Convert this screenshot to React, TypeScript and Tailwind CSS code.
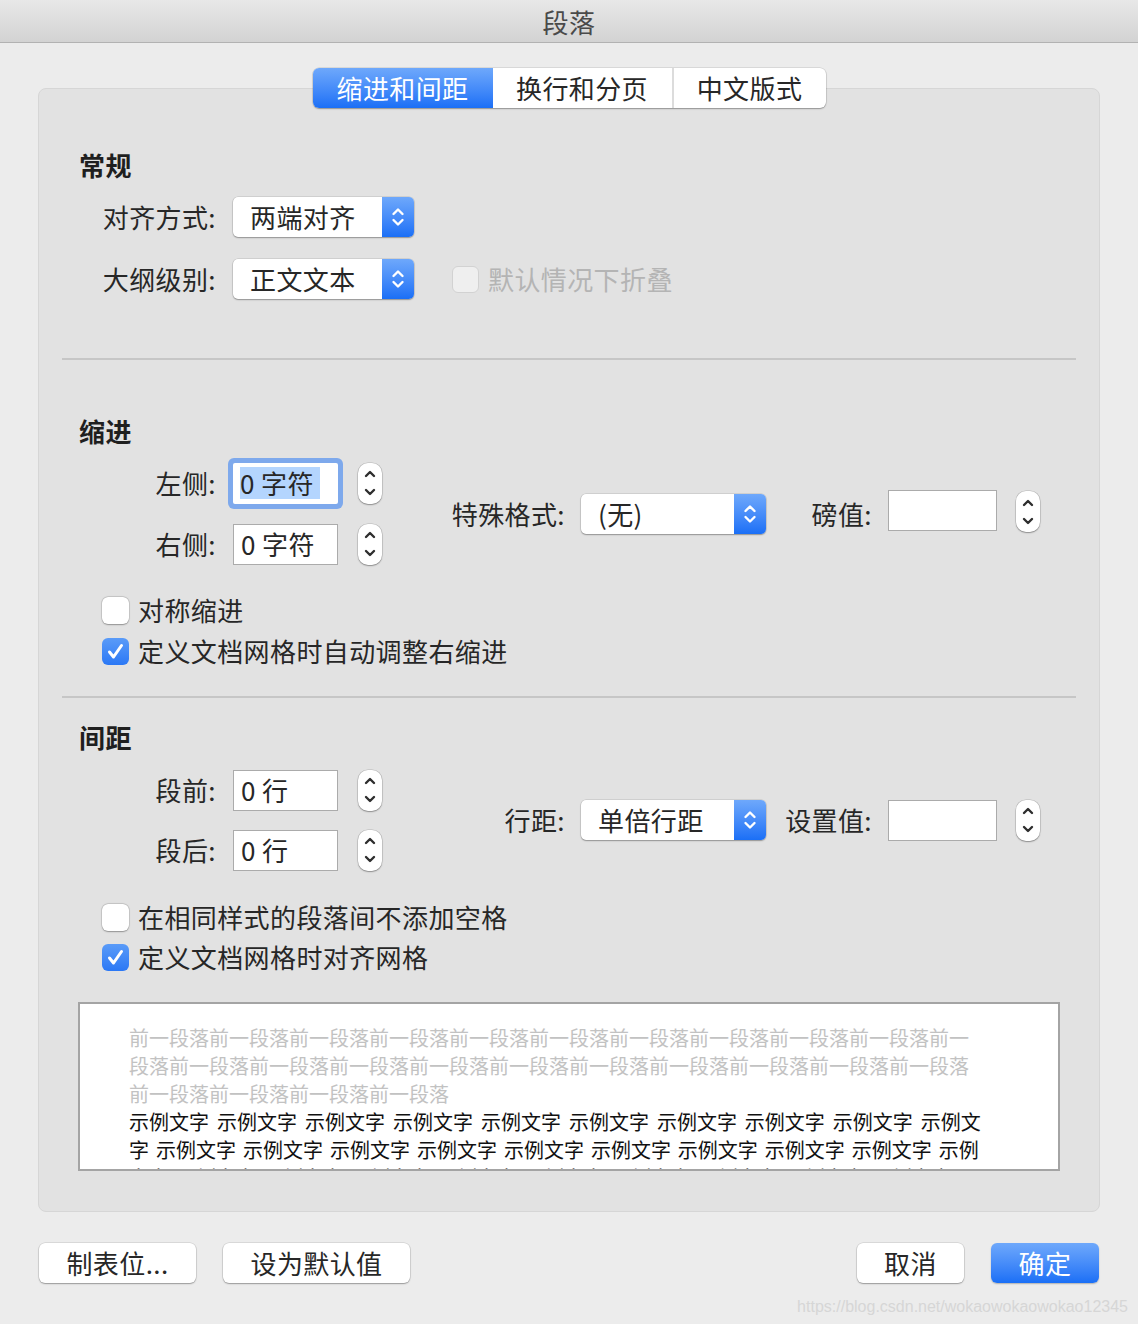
import React from 'react';

const PopupArrows = () => (
  <svg width="14" height="20" viewBox="0 0 14 20" fill="none" stroke="white" strokeWidth="2.4" strokeLinecap="round" strokeLinejoin="round">
    <path d="M2.5 7 L7 2.5 L11.5 7" />
    <path d="M2.5 13 L7 17.5 L11.5 13" />
  </svg>
);

const StepperArrows = () => (
  <svg width="12" height="26" viewBox="0 0 12 26" fill="none" stroke="#2e2e2e" strokeWidth="2.4" strokeLinecap="round" strokeLinejoin="round">
    <path d="M2 6 L6 2 L10 6" />
    <path d="M2 20 L6 24 L10 20" />
  </svg>
);

function Popup({ value, width }: { value: string; width: string }) {
  return (
    <div className={`${width} h-[40px] flex rounded-[5px] bg-white overflow-hidden shadow-[0_1px_1.5px_rgba(0,0,0,0.3),0_0_0_0.5px_rgba(0,0,0,0.15)]`}>
      <div className="flex-1 flex items-center pl-[17px] text-[26px] leading-none">{value}</div>
      <div className="w-[32px] flex items-center justify-center bg-linear-to-b from-[#6ea8fb] to-[#1a6ff6]">
        <PopupArrows />
      </div>
    </div>
  );
}

function Stepper() {
  return (
    <div className="w-[24px] h-[41px] flex items-center justify-center rounded-[10px] bg-white shadow-[0_1px_1.5px_rgba(0,0,0,0.3),0_0_0_0.5px_rgba(0,0,0,0.18)]">
      <StepperArrows />
    </div>
  );
}

function Field({ value, width, focused }: { value?: string; width: string; focused?: boolean }) {
  return (
    <div
      className={`${width} h-[41px] flex items-center pl-[7px] bg-white text-[26px] leading-none ${
        focused ? 'rounded-[2px] shadow-[0_0_0_5px_#7ea9ec]' : 'border border-[#ababab]'
      }`}
    >
      {value && (focused ? <span className="bg-[#b4d5fe] py-[3px] pr-[6px]">{value}</span> : <span>{value}</span>)}
    </div>
  );
}

function Checkbox({ label, checked, disabled }: { label: string; checked?: boolean; disabled?: boolean }) {
  return (
    <div className="flex items-center h-[40px]">
      {checked ? (
        <div className="w-[27px] h-[27px] rounded-[6px] bg-linear-to-b from-[#5a9bf8] to-[#2b78f5] flex items-center justify-center">
          <svg width="27" height="27" viewBox="0 0 27 27" fill="none" stroke="white" strokeWidth="3" strokeLinecap="round" strokeLinejoin="round">
            <path d="M7.5 14 L11.5 19 L19.5 7.5" />
          </svg>
        </div>
      ) : (
        <div
          className={`w-[27px] h-[27px] rounded-[6px] ${
            disabled ? 'bg-[#efefef] border border-[#d2d2d2]' : 'bg-white shadow-[0_0.5px_1.5px_rgba(0,0,0,0.3),0_0_0_0.5px_rgba(0,0,0,0.15)]'
          }`}
        />
      )}
      <span className={`ml-[9px] text-[26px] leading-none ${disabled ? 'text-[#b4b4b4]' : ''}`}>{label}</span>
    </div>
  );
}

const Label = ({ text, width }: { text: string; width: string }) => (
  <div className={`${width} text-right text-[26px] leading-none`}>{text}</div>
);

const Heading = ({ text }: { text: string }) => (
  <div className="h-[36px] flex items-center text-[26px] font-bold leading-none text-[#1f1f1f]">{text}</div>
);

const Separator = () => <div className="h-[2px] bg-[#c6c6c6]" />;

function Button({ text, width, primary }: { text: string; width: string; primary?: boolean }) {
  return (
    <div
      className={`${width} h-[40px] flex items-center justify-center rounded-[6px] text-[26px] leading-none ${
        primary
          ? 'bg-linear-to-b from-[#6ea8fb] to-[#1a6ff6] text-white shadow-[0_1px_1.5px_rgba(0,0,0,0.25)]'
          : 'bg-white shadow-[0_1px_1.5px_rgba(0,0,0,0.3),0_0_0_0.5px_rgba(0,0,0,0.15)]'
      }`}
    >
      {text}
    </div>
  );
}

const grayLines = [
  '前一段落前一段落前一段落前一段落前一段落前一段落前一段落前一段落前一段落前一段落前一',
  '段落前一段落前一段落前一段落前一段落前一段落前一段落前一段落前一段落前一段落前一段落',
  '前一段落前一段落前一段落前一段落',
];

const sampleLines = [
  { text: '示例文字 示例文字 示例文字 示例文字 示例文字 示例文字 示例文字 示例文字 示例文字 示例文', cls: '[word-spacing:3.5px]' },
  { text: '字 示例文字 示例文字 示例文字 示例文字 示例文字 示例文字 示例文字 示例文字 示例文字 示例', cls: '[word-spacing:2.5px]' },
  { text: '文字 示例文字 示例文字 示例文字 示例文字 示例文字 示例文字 示例文字 示例文字 示例文字 示', cls: '[word-spacing:2.5px]' },
];

export default function App() {
  return (
    <div className="relative w-[1138px] h-[1324px] bg-[#ececec] flex flex-col overflow-hidden text-[#272727] tracking-[0.4px] [font-family:'Noto_Sans_CJK_SC','Noto_Sans',sans-serif]">
      {/* title bar */}
      <div className="h-[43px] shrink-0 flex items-center justify-center pt-px bg-linear-to-b from-[#e8e8e8] to-[#d3d3d3] border-b border-[#b2b2b2] text-[26px] leading-none text-[#4a4a4a]">
        段落
      </div>

      <div className="px-[38px] pt-[25px]">
        {/* tabs */}
        <div className="relative z-10 flex justify-center">
          <div className="flex h-[40px] rounded-[6px] bg-white overflow-hidden text-[26px] leading-none shadow-[0_1px_1.5px_rgba(0,0,0,0.3),0_0_0_0.5px_rgba(0,0,0,0.15)]">
            <div className="w-[180px] flex items-center justify-center text-white bg-linear-to-b from-[#6ea8fb] to-[#1a6ff6]">缩进和间距</div>
            <div className="w-[179px] flex items-center justify-center">换行和分页</div>
            <div className="w-[154px] flex items-center justify-center border-l-2 border-[#dcdcdc]">中文版式</div>
          </div>
        </div>

        {/* group box */}
        <div className="-mt-[20px] h-[1124px] rounded-[8px] bg-[#e2e2e2] border border-[#d6d6d6] px-[23px] pt-[58px]">
          {/* 常规 */}
          <div className="pl-[17px]">
            <Heading text="常规" />
            <div className="mt-[14px] flex items-center h-[40px]">
              <Label text="对齐方式:" width="w-[137px]" />
              <div className="ml-[17px]">
                <Popup value="两端对齐" width="w-[181px]" />
              </div>
            </div>
            <div className="mt-[22px] flex items-center h-[40px]">
              <Label text="大纲级别:" width="w-[137px]" />
              <div className="ml-[17px]">
                <Popup value="正文文本" width="w-[181px]" />
              </div>
              <div className="ml-[38px]">
                <Checkbox label="默认情况下折叠" disabled />
              </div>
            </div>
          </div>

          <div className="mt-[59px]">
            <Separator />
          </div>

          {/* 缩进 */}
          <div className="pl-[17px] mt-[53px]">
            <Heading text="缩进" />
            <div className="mt-[13px] flex items-center">
              <div className="flex flex-col gap-[19px]">
                <div className="flex items-center h-[42px]">
                  <Label text="左侧:" width="w-[137px]" />
                  <div className="ml-[17px]">
                    <Field value="0 字符" width="w-[105px]" focused />
                  </div>
                  <div className="ml-[20px]">
                    <Stepper />
                  </div>
                </div>
                <div className="flex items-center h-[42px]">
                  <Label text="右侧:" width="w-[137px]" />
                  <div className="ml-[17px]">
                    <Field value="0 字符" width="w-[105px]" />
                  </div>
                  <div className="ml-[20px]">
                    <Stepper />
                  </div>
                </div>
              </div>
              <Label text="特殊格式:" width="w-[183px]" />
              <div className="ml-[16px]">
                <Popup value="(无)" width="w-[185px]" />
              </div>
              <Label text="磅值:" width="w-[106px]" />
              <div className="ml-[16px] -mt-[6px]">
                <Field width="w-[109px]" />
              </div>
              <div className="ml-[19px] -mt-[4px]">
                <Stepper />
              </div>
            </div>
            <div className="mt-[25px] pl-[23px] flex flex-col gap-[1px]">
              <Checkbox label="对称缩进" />
              <Checkbox label="定义文档网格时自动调整右缩进" checked />
            </div>
          </div>

          <div className="mt-[25px]">
            <Separator />
          </div>

          {/* 间距 */}
          <div className="pl-[17px] mt-[21px]">
            <Heading text="间距" />
            <div className="mt-[14px] flex items-center">
              <div className="flex flex-col gap-[18px]">
                <div className="flex items-center h-[42px]">
                  <Label text="段前:" width="w-[137px]" />
                  <div className="ml-[17px]">
                    <Field value="0 行" width="w-[105px]" />
                  </div>
                  <div className="ml-[20px]">
                    <Stepper />
                  </div>
                </div>
                <div className="flex items-center h-[42px]">
                  <Label text="段后:" width="w-[137px]" />
                  <div className="ml-[17px]">
                    <Field value="0 行" width="w-[105px]" />
                  </div>
                  <div className="ml-[20px]">
                    <Stepper />
                  </div>
                </div>
              </div>
              <Label text="行距:" width="w-[183px]" />
              <div className="ml-[16px]">
                <Popup value="单倍行距" width="w-[185px]" />
              </div>
              <Label text="设置值:" width="w-[106px]" />
              <div className="ml-[16px]">
                <Field width="w-[109px]" />
              </div>
              <div className="ml-[19px]">
                <Stepper />
              </div>
            </div>
            <div className="mt-[26px] pl-[23px] flex flex-col">
              <Checkbox label="在相同样式的段落间不添加空格" />
              <Checkbox label="定义文档网格时对齐网格" checked />
            </div>
          </div>

          {/* preview */}
          <div className="mt-[25px] mx-[16px] h-[169px] bg-white border-2 border-[#a4a4a4] overflow-hidden pl-[49px] pt-[20px] text-[20px] leading-[28px] tracking-normal">
            {grayLines.map((line, i) => (
              <div key={`g${i}`} className="whitespace-pre text-[#c2c2c2]">{line}</div>
            ))}
            {sampleLines.map((line, i) => (
              <div key={`s${i}`} className={`whitespace-pre text-[#111] ${line.cls}`}>{line.text}</div>
            ))}
          </div>
        </div>

        {/* buttons */}
        <div className="mt-[31px] flex items-center">
          <div className="ml-px">
            <Button text="制表位..." width="w-[157px]" />
          </div>
          <div className="ml-[27px]">
            <Button text="设为默认值" width="w-[187px]" />
          </div>
          <div className="ml-auto">
            <Button text="取消" width="w-[107px]" />
          </div>
          <div className="ml-[27px] mr-px">
            <Button text="确定" width="w-[108px]" primary />
          </div>
        </div>
      </div>

      <div className="absolute right-[10px] bottom-[9px] text-[16px] leading-none tracking-normal text-[#d6d6d6] [font-family:'Liberation_Sans',sans-serif]">
        https://blog.csdn.net/wokaowokaowokao12345
      </div>
    </div>
  );
}
